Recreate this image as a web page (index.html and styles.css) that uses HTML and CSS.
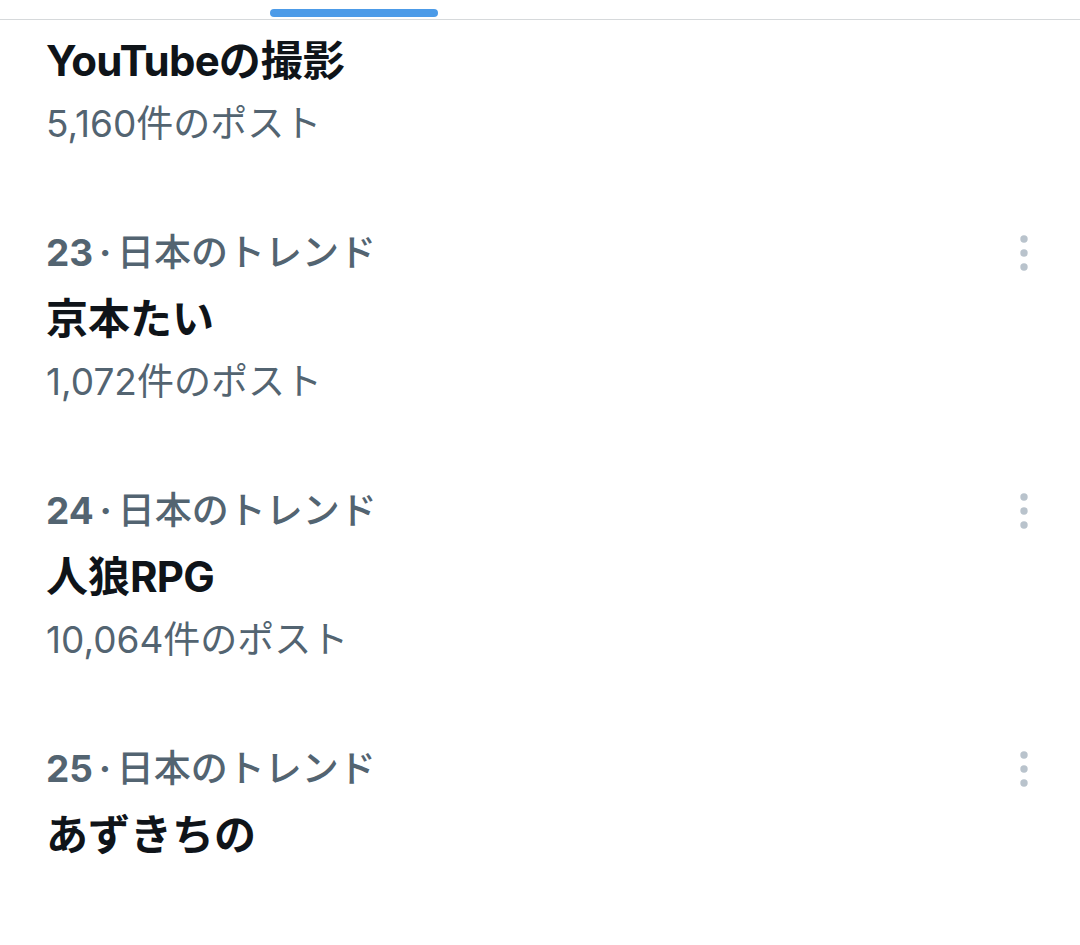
FILE: index.html
```html
<!DOCTYPE html>
<html lang="ja">
<head>
<meta charset="utf-8">
<link rel="stylesheet" href="styles.css">
</head>
<body>
<div class="tabs">
  <div class="indicator"></div>
</div>
<ul class="trends">
  <li class="trend first">
    <div class="body">
      <div class="title"><span class="latin">YouTube</span>の撮影</div>
      <div class="count">5,160件のポスト</div>
    </div>
  </li>
  <li class="trend">
    <div class="body">
      <div class="meta"><span class="rank">23 · </span>日本のトレンド</div>
      <div class="title">京本たい</div>
      <div class="count">1,072件のポスト</div>
    </div>
    <div class="more"><svg viewBox="0 0 8 36" width="8" height="36"><circle cx="4" cy="4" r="3.7"/><circle cx="4" cy="18" r="3.7"/><circle cx="4" cy="32" r="3.7"/></svg></div>
  </li>
  <li class="trend">
    <div class="body">
      <div class="meta"><span class="rank">24 · </span>日本のトレンド</div>
      <div class="title">人狼<span class="latin">RPG</span></div>
      <div class="count">10,064件のポスト</div>
    </div>
    <div class="more"><svg viewBox="0 0 8 36" width="8" height="36"><circle cx="4" cy="4" r="3.7"/><circle cx="4" cy="18" r="3.7"/><circle cx="4" cy="32" r="3.7"/></svg></div>
  </li>
  <li class="trend">
    <div class="body">
      <div class="meta"><span class="rank">25 · </span>日本のトレンド</div>
      <div class="title">あずきちの</div>
    </div>
    <div class="more"><svg viewBox="0 0 8 36" width="8" height="36"><circle cx="4" cy="4" r="3.7"/><circle cx="4" cy="18" r="3.7"/><circle cx="4" cy="32" r="3.7"/></svg></div>
  </li>
</ul>
</body>
</html>
```
FILE: styles.css
```css
html, body {
  margin: 0;
  padding: 0;
  background: #ffffff;
}
body {
  font-family: Inter, "Noto Sans CJK JP", sans-serif;
  color: #0f1419;
  width: 1080px;
  height: 945px;
  overflow: hidden;
}
.tabs {
  border-bottom: 1px solid #d6d9db;
  padding-top: 9px;
  box-sizing: border-box;
  height: 20px;
}
.indicator {
  margin-left: 270px;
  width: 168px;
  height: 8px;
  border-radius: 4px;
  background: #4c9be8;
}
.trends {
  list-style: none;
  margin: 0;
  padding: 0;
}
.trend {
  display: flex;
  justify-content: space-between;
  align-items: flex-start;
  padding: 42px 52px 43px 46px;
}
.trend.first {
  padding-top: 11px;
}
.body {
  display: flex;
  flex-direction: column;
}
.meta {
  font-size: 37px;
  line-height: 44px;
  font-weight: 500;
  color: #536471;
  white-space: nowrap;
  word-spacing: -3px;
}
.rank {
  font-weight: 700;
}
.title {
  font-size: 42px;
  line-height: 60px;
  font-weight: 700;
  margin-top: 14px;
  white-space: nowrap;
}
.latin {
  letter-spacing: -0.8px;
}
.first .title {
  margin-top: 0;
}
.count {
  font-size: 37px;
  line-height: 44px;
  color: #536471;
  margin-top: 11px;
  white-space: nowrap;
}
.more {
  display: flex;
  align-items: center;
  height: 44px;
}
.more svg {
  display: block;
  fill: #b9c3cc;
}
```
